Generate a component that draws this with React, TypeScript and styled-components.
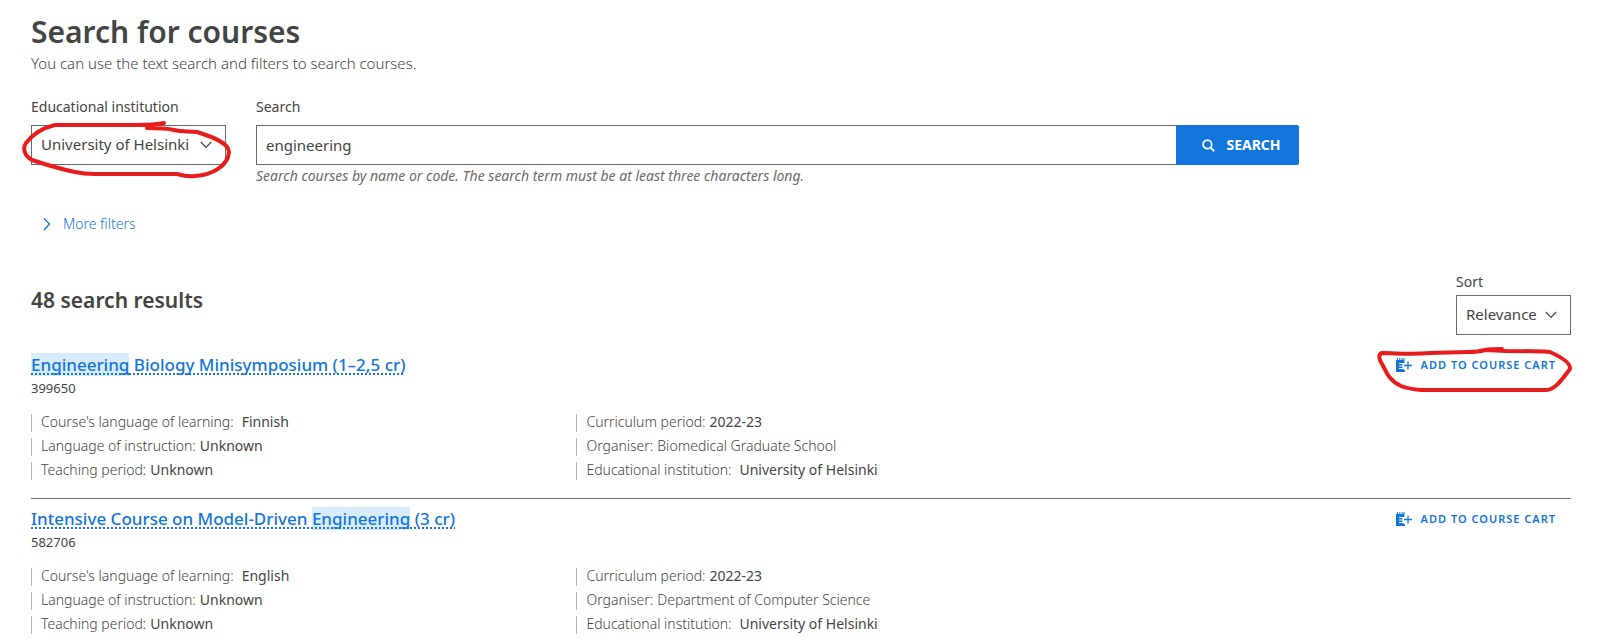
import React from 'react';
import styled, { createGlobalStyle } from 'styled-components';

const ink = '#444';
const grey = '#6b6b6b';
const blue = '#1275dc';

const GlobalStyle = createGlobalStyle`
  *, *::before, *::after { box-sizing: border-box; }
  body {
    margin: 0;
    background: #fff;
    color: ${ink};
    font: 400 14px/18px "Noto Sans", "Open Sans", sans-serif;
  }
`;

const Page = styled.main`
  padding: 9px 32px 4px 31px;
`;

const PageTitle = styled.h1`
  margin: 0;
  font-size: 30px;
  line-height: 46px;
  font-weight: 600;
`;

const Lead = styled.p`
  margin: 0;
  font-size: 15px;
  line-height: 16px;
  font-weight: 300;
`;

const SearchForm = styled.form`
  display: flex;
  align-items: flex-start;
  gap: 30px;
  margin-top: 27px;
  padding-right: 272px;
`;

const Field = styled.div<{ $grow?: boolean }>`
  display: flex;
  flex-direction: column;
  flex: ${(p) => (p.$grow ? '1 1 0' : '0 0 auto')};
`;

const Label = styled.label<{ $tight?: boolean }>`
  line-height: 18px;
  margin-bottom: ${(p) => (p.$tight ? 4 : 9)}px;
`;

const SelectBox = styled.div<{ $width: number }>`
  position: relative;
  width: ${(p) => p.$width}px;
`;

const Select = styled.select`
  display: block;
  width: 100%;
  height: 40px;
  margin: 0;
  padding: 0 9px 2px;
  border: 1px solid ${grey};
  border-radius: 0;
  background: #fff;
  color: ${ink};
  font: 400 15px/20px "Noto Sans", "Open Sans", sans-serif;
  appearance: none;
`;

const SelectArrow = styled.svg`
  position: absolute;
  right: 14px;
  top: 16px;
  width: 12px;
  height: 8px;
  pointer-events: none;
`;

const SearchBar = styled.div`
  display: flex;
`;

const SearchInput = styled.input`
  flex: 1;
  min-width: 0;
  height: 40px;
  padding: 0 9px;
  border: 1px solid ${grey};
  border-right: 0;
  border-radius: 0;
  color: ${ink};
  font: 400 15px/20px "Noto Sans", "Open Sans", sans-serif;
`;

const SearchButton = styled.button`
  display: flex;
  align-items: center;
  justify-content: center;
  gap: 11px;
  width: 123px;
  height: 40px;
  padding: 0 0 0 8px;
  border: 0;
  border-radius: 0 2px 2px 0;
  background: ${blue};
  color: #fff;
  font: 700 14px/20px "Noto Sans", "Open Sans", sans-serif;
`;

const Hint = styled.p`
  margin: 2px 0 0;
  color: ${grey};
  font-style: italic;
  line-height: 18px;
`;

const MoreFilters = styled.button`
  display: flex;
  align-items: center;
  gap: 12px;
  margin-top: 30px;
  padding: 0 0 0 12px;
  border: 0;
  background: none;
  color: ${blue};
  font: 300 14px/18px "Noto Sans", "Open Sans", sans-serif;
`;

const ResultsBar = styled.div`
  display: flex;
  align-items: center;
  justify-content: space-between;
  margin-top: 40px;
`;

const ResultsTitle = styled.h2`
  margin: 0 0 8px;
  font-size: 21px;
  line-height: 28px;
  font-weight: 600;
`;

const Results = styled.ul`
  margin: 0;
  padding: 14px 0 0;
  list-style: none;
`;

const Course = styled.li`
  & + & {
    margin-top: 18px;
    padding-top: 4px;
    border-top: 1px solid ${grey};
  }
`;

const CourseHead = styled.div`
  display: flex;
  align-items: flex-start;
  justify-content: space-between;
`;

const CourseTitle = styled.h3`
  margin: 0;
  font-size: 17px;
  line-height: 32px;
  font-weight: 500;
`;

const CourseLink = styled.a`
  color: ${blue};
  text-decoration: underline dotted;
  text-decoration-thickness: 2px;
  text-underline-offset: 2px;
  text-decoration-skip-ink: none;
`;

const Highlight = styled.mark`
  background: #d9ecfc;
  color: inherit;
`;

const Code = styled.p`
  margin: 0;
  font-size: 13px;
  line-height: 14px;
`;

const CartButton = styled.button`
  position: relative;
  display: flex;
  align-items: center;
  gap: 8px;
  padding: 0 15px 0 0;
  border: 0;
  background: none;
  color: ${blue};
  font: 600 11px/32px "Noto Sans", "Open Sans", sans-serif;
  letter-spacing: 1px;
`;

const Facts = styled.dl`
  display: grid;
  grid-template-columns: 5fr 7fr;
  gap: 6px 0;
  width: 85%;
  margin: 19px 0 0;
`;

const Fact = styled.div`
  display: flex;
  gap: 4px;
  height: 18px;
  padding-left: 9px;
  border-left: 1px solid #b4b4b4;
  line-height: 16px;
`;

const Term = styled.dt<{ $wide?: boolean }>`
  font-weight: 300;
  margin-right: ${(p) => (p.$wide ? 4 : 0)}px;
`;

const Value = styled.dd<{ $light?: boolean }>`
  margin: 0;
  font-weight: ${(p) => (p.$light ? 300 : 400)};
`;

const SelectMark = styled.svg`
  position: absolute;
  left: -11px;
  top: -9px;
  width: 216px;
  height: 66px;
  pointer-events: none;
`;

const CartMark = styled.svg`
  position: absolute;
  right: -4px;
  top: -5px;
  width: 200px;
  height: 50px;
  pointer-events: none;
`;

const Arrow = () => (
  <SelectArrow viewBox="0 0 12 8" fill="none" stroke={ink} strokeWidth="1.2" aria-hidden="true">
    <path d="M.8 1 6 6.4 11.2 1" />
  </SelectArrow>
);

const Magnifier = () => (
  <svg width="13" height="13" viewBox="0 0 13 13" fill="none" stroke="#fff" strokeWidth="1.7" aria-hidden="true">
    <circle cx="5.4" cy="5.4" r="4.3" />
    <path d="M8.4 8.4 12.2 12.2" strokeWidth="2" />
  </svg>
);

const Chevron = () => (
  <svg width="8" height="14" viewBox="0 0 8 14" fill="none" stroke={blue} strokeWidth="1.3" aria-hidden="true">
    <path d="M1 1.5 6.6 7 1 13" />
  </svg>
);

const NotepadPlus = () => (
  <svg width="17" height="14" viewBox="0 0 17 14" aria-hidden="true">
    <path
      fill={blue}
      d="M0 2H1V0H2V2H3.300V0H4.300V2H5.600V0H6.600V2H7.500V0H8.500V5H3V6H6.500V7.500H3V8.500H6.500V10H3V11H7.500V12H9V14H0Z"
    />
    <path d="M12 3.500V11.500M8 7.500H16" stroke={blue} strokeWidth="1.3" />
  </svg>
);

type CourseData = {
  title: [string, string, string];
  code: string;
  language: string;
  organiser: string;
  marked?: boolean;
};

const courses: CourseData[] = [
  {
    title: ['', 'Engineering', ' Biology Minisymposium (1–2,5 cr)'],
    code: '399650',
    language: 'Finnish',
    organiser: 'Biomedical Graduate School',
    marked: true,
  },
  {
    title: ['Intensive Course on Model-Driven ', 'Engineering', ' (3 cr)'],
    code: '582706',
    language: 'English',
    organiser: 'Department of Computer Science',
  },
];

const CourseItem = ({ course }: { course: CourseData }) => (
  <Course>
    <CourseHead>
      <CourseTitle>
        <CourseLink href="#course">
          {course.title[0]}
          <Highlight>{course.title[1]}</Highlight>
          {course.title[2]}
        </CourseLink>
      </CourseTitle>
      <CartButton type="button">
        <NotepadPlus />
        ADD TO COURSE CART
        {course.marked && (
          <CartMark viewBox="1375 343 200 50" fill="none" stroke="#e81c1c" strokeWidth="4" strokeLinecap="round" strokeLinejoin="round" aria-hidden="true">
            <path d="M1502 348C1496 348 1490 348 1485 349C1478 351 1474 351 1468 351L1430 352C1410 354 1396 352 1382 352C1378 353 1379 359 1382 363C1386 370 1388 379 1401 385Q1409 388 1421 389L1547 389C1556 388 1563 377 1570 368C1571 362 1561 356 1550 351C1536 350 1520 350 1506 350L1485 349" />
          </CartMark>
        )}
      </CartButton>
    </CourseHead>
    <Code>{course.code}</Code>
    <Facts>
      <Fact>
        <Term $wide>Course's language of learning:</Term>
        <Value>{course.language}</Value>
      </Fact>
      <Fact>
        <Term>Curriculum period:</Term>
        <Value>2022-23</Value>
      </Fact>
      <Fact>
        <Term>Language of instruction:</Term>
        <Value>Unknown</Value>
      </Fact>
      <Fact>
        <Term>Organiser:</Term>
        <Value $light>{course.organiser}</Value>
      </Fact>
      <Fact>
        <Term>Teaching period:</Term>
        <Value>Unknown</Value>
      </Fact>
      <Fact>
        <Term $wide>Educational institution:</Term>
        <Value>University of Helsinki</Value>
      </Fact>
    </Facts>
  </Course>
);

export default function App() {
  return (
    <>
      <GlobalStyle />
      <Page>
        <PageTitle>Search for courses</PageTitle>
        <Lead>You can use the text search and filters to search courses.</Lead>
        <SearchForm onSubmit={(e) => e.preventDefault()}>
          <Field>
            <Label htmlFor="institution">Educational institution</Label>
            <SelectBox $width={195}>
              <Select id="institution">
                <option>University of Helsinki</option>
              </Select>
              <Arrow />
              <SelectMark viewBox="20 116 216 66" fill="none" stroke="#e81c1c" strokeWidth="4" strokeLinecap="round" strokeLinejoin="round" aria-hidden="true">
                <path d="M164 123C156 125 146 125 135 125L55 125C42 128 32 135 26 143C22 149 25 156 32 160C44 164 60 169 75 172Q84 174 95 174L177 174C184 176 189 177 195 176C212 175 228 166 229 152C229 143 213 137 197 132C188 131 182 132 174 130C166 128 160 128 147 128" />
              </SelectMark>
            </SelectBox>
          </Field>
          <Field $grow>
            <Label htmlFor="search">Search</Label>
            <SearchBar>
              <SearchInput id="search" type="text" defaultValue="engineering" />
              <SearchButton type="submit">
                <Magnifier />
                SEARCH
              </SearchButton>
            </SearchBar>
            <Hint>Search courses by name or code. The search term must be at least three characters long.</Hint>
          </Field>
        </SearchForm>
        <MoreFilters type="button">
          <Chevron />
          More filters
        </MoreFilters>
        <ResultsBar>
          <ResultsTitle>48 search results</ResultsTitle>
          <Field>
            <Label htmlFor="sort" $tight>Sort</Label>
            <SelectBox $width={115}>
              <Select id="sort">
                <option>Relevance</option>
              </Select>
              <Arrow />
            </SelectBox>
          </Field>
        </ResultsBar>
        <Results>
          {courses.map((course) => (
            <CourseItem key={course.code} course={course} />
          ))}
        </Results>
      </Page>
    </>
  );
}
